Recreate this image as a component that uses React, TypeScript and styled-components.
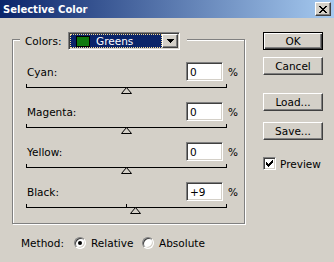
import React from "react";
import styled, { createGlobalStyle, css } from "styled-components";

const FACE = "#D4D0C8";
const SHADOW = "#808080";
const DARK = "#404040";
const NAVY = "#0A246A";

const GlobalStyle = createGlobalStyle`
  html, body { margin: 0; padding: 0; background: ${FACE}; }
  body {
    font-family: "DejaVu Sans", sans-serif;
    font-size: 10.5px;
    color: #000;
  }
  #root { width: 334px; height: 262px; overflow: hidden; }
`;

const raised = css`
  border: 1px solid;
  border-color: #fff ${DARK} ${DARK} #fff;
  box-shadow: inset -1px -1px 0 ${SHADOW};
`;

const sunken = css`
  border: 1px solid;
  border-color: ${SHADOW} #fff #fff ${SHADOW};
  box-shadow: inset 1px 1px 0 ${DARK}, inset -1px -1px 0 ${FACE};
`;

const Window = styled.div`
  width: 334px;
  height: 262px;
  background: ${FACE};
  display: flex;
  flex-direction: column;
`;

const TitleBar = styled.div`
  height: 18px;
  flex: none;
  box-sizing: border-box;
  padding: 0 3px 0 3px;
  background: linear-gradient(to right, ${NAVY}, #a6caf0);
  display: flex;
  align-items: center;
  justify-content: space-between;
`;

const Title = styled.span`
  color: #fff;
  font-weight: bold;
  font-size: 10px;
`;

const CloseButton = styled.div`
  width: 16px;
  height: 14px;
  box-sizing: border-box;
  background: ${FACE};
  ${raised};
  display: flex;
  align-items: center;
  justify-content: center;
`;

const Body = styled.div`
  flex: 1;
  display: flex;
  padding: 14px 11px 0 12px;
`;

const LeftColumn = styled.div`
  width: 233px;
  display: flex;
  flex-direction: column;
`;

const RightColumn = styled.div`
  margin-left: auto;
  width: 60px;
  display: flex;
  flex-direction: column;
`;

const GroupBox = styled.div`
  margin-top: 7px;
  padding: 0 0 1px 13px;
  border: 1px solid ${SHADOW};
  box-shadow: inset 1px 1px 0 #fff, 1px 1px 0 #fff;
  display: flex;
  flex-direction: column;
`;

const GroupHeader = styled.div`
  align-self: flex-start;
  margin: -8px 0 0 -6px;
  padding: 0 7px 0 5px;
  height: 18px;
  background: ${FACE};
  display: flex;
  align-items: center;
`;

const HeaderLabel = styled.span`
  width: 43px;
`;

const Combo = styled.div`
  width: 112px;
  height: 18px;
  box-sizing: border-box;
  ${sunken};
  background: #fff;
  padding: 1px;
  display: flex;
`;

const ComboField = styled.div`
  flex: 1;
  box-sizing: border-box;
  background: ${NAVY};
  border: 1px dotted #f5db95;
  color: #fff;
  display: flex;
  align-items: center;
  padding-left: 5px;
  gap: 6px;
`;

const Swatch = styled.div<{ $color: string }>`
  width: 14px;
  height: 11px;
  box-sizing: border-box;
  border: 1px solid #000;
  background: ${(p) => p.$color};
`;

const ComboArrow = styled.div`
  width: 16px;
  box-sizing: border-box;
  background: ${FACE};
  ${raised};
  display: flex;
  align-items: center;
  justify-content: center;
`;

const Channels = styled.div`
  padding-top: 12px;
  display: flex;
  flex-direction: column;
`;

const Channel = styled.div`
  display: flex;
  flex-direction: column;
`;

const InputRow = styled.div`
  height: 19px;
  display: flex;
  align-items: center;
`;

const ChannelLabel = styled.span`
  flex: 1;
  padding-left: 1px;
`;

const NumberField = styled.input`
  width: 37px;
  height: 19px;
  box-sizing: border-box;
  ${sunken};
  background: #fff;
  font: inherit;
  color: #000;
  padding: 0 0 0 3px;
  margin: 0;
  outline: none;
`;

const Percent = styled.span`
  width: 16px;
  margin-left: 5px;
`;

const SliderTrack = styled.div`
  position: relative;
  width: 201px;
  height: 4px;
  box-sizing: border-box;
  margin: 3px 0 14px;
  border: 1px solid #000;
  border-top: none;
`;

const MidTick = styled.div`
  position: absolute;
  left: 99px;
  top: 0;
  width: 1px;
  height: 3px;
  background: #000;
`;

const Thumb = styled.svg`
  position: absolute;
  top: 3px;
  display: block;
`;

const MethodRow = styled.div`
  margin-top: 12px;
  height: 13px;
  padding-left: 9px;
  display: flex;
  align-items: center;
`;

const MethodLabel = styled.span`
  width: 53px;
`;

const RadioOption = styled.label`
  width: 68px;
  display: flex;
  align-items: center;
  gap: 5px;
`;

const RadioDot = styled.span<{ $checked?: boolean }>`
  width: 12px;
  height: 12px;
  box-sizing: border-box;
  border-radius: 50%;
  border: 1px solid;
  border-color: ${SHADOW} #fff #fff ${SHADOW};
  box-shadow: inset 1px 1px 0 ${DARK}, inset -1px -1px 0 ${FACE};
  background: #fff;
  display: flex;
  align-items: center;
  justify-content: center;
  &::after {
    content: "";
    width: 4px;
    height: 4px;
    border-radius: 50%;
    background: ${(p) => (p.$checked ? "#000" : "transparent")};
  }
`;

const DialogButton = styled.div<{ $default?: boolean; $gap?: number }>`
  height: 18px;
  margin-top: ${(p) => p.$gap ?? 0}px;
  box-sizing: border-box;
  background: ${FACE};
  display: flex;
  align-items: center;
  justify-content: center;
  ${(p) =>
    p.$default
      ? css`
          border: 1px solid #000;
          box-shadow: inset 1px 1px 0 #fff, inset -1px -1px 0 ${DARK},
            inset -2px -2px 0 ${SHADOW};
        `
      : raised};
`;

const CheckRow = styled.label`
  margin-top: 17px;
  height: 13px;
  display: flex;
  align-items: center;
  gap: 4px;
`;

const CheckBox = styled.span`
  width: 13px;
  height: 13px;
  box-sizing: border-box;
  ${sunken};
  background: #fff;
  display: flex;
  align-items: center;
  justify-content: center;
`;

const channels = [
  { name: "Cyan:", value: 0, text: "0" },
  { name: "Magenta:", value: 0, text: "0" },
  { name: "Yellow:", value: 0, text: "0" },
  { name: "Black:", value: 9, text: "+9" },
];

const CloseGlyph = () => (
  <svg width="8" height="7" viewBox="0 0 8 7" shapeRendering="crispEdges">
    <path d="M0 0h2v1H0zM6 0h2v1H6zM1 1h2v1H1zM5 1h2v1H5zM2 2h4v1H2zM3 3h2v1H3zM2 4h4v1H2zM1 5h2v1H1zM5 5h2v1H5zM0 6h2v1H0zM6 6h2v1H6z" fill="#000" />
  </svg>
);

const ArrowGlyph = () => (
  <svg width="7" height="4" viewBox="0 0 7 4" shapeRendering="crispEdges">
    <path d="M0 0h7v1H0zM1 1h5v1H1zM2 2h3v1H2zM3 3h1v1H3z" fill="#000" />
  </svg>
);

const CheckGlyph = () => (
  <svg width="7" height="7" viewBox="0 0 7 7" shapeRendering="crispEdges">
    <path d="M0 2h1v3H0zM1 3h1v3H1zM2 4h1v3H2zM3 3h1v3H3zM4 2h1v3H4zM5 1h1v3H5zM6 0h1v3H6z" fill="#000" />
  </svg>
);

const Slider: React.FC<{ value: number }> = ({ value }) => {
  const offset = Math.round(value * 0.995);
  return (
    <SliderTrack>
      {value !== 0 && <MidTick />}
      <Thumb width="11" height="7" viewBox="0 0 11 7" style={{ left: `${94 + offset}px` }}>
        <polygon points="5.5,0.5 10.5,6.5 0.5,6.5" fill={FACE} stroke="#000" strokeWidth="1" />
      </Thumb>
    </SliderTrack>
  );
};

export default function App() {
  return (
    <>
      <GlobalStyle />
      <Window>
        <TitleBar>
          <Title>Selective Color</Title>
          <CloseButton>
            <CloseGlyph />
          </CloseButton>
        </TitleBar>
        <Body>
          <LeftColumn>
            <GroupBox>
              <GroupHeader>
                <HeaderLabel>Colors:</HeaderLabel>
                <Combo>
                  <ComboField>
                    <Swatch $color="#0f7a0f" />
                    <span>Greens</span>
                  </ComboField>
                  <ComboArrow>
                    <ArrowGlyph />
                  </ComboArrow>
                </Combo>
              </GroupHeader>
              <Channels>
                {channels.map((c) => (
                  <Channel key={c.name}>
                    <InputRow>
                      <ChannelLabel>{c.name}</ChannelLabel>
                      <NumberField readOnly value={c.text} />
                      <Percent>%</Percent>
                    </InputRow>
                    <Slider value={c.value} />
                  </Channel>
                ))}
              </Channels>
            </GroupBox>
            <MethodRow>
              <MethodLabel>Method:</MethodLabel>
              <RadioOption>
                <RadioDot $checked />
                <span>Relative</span>
              </RadioOption>
              <RadioOption>
                <RadioDot />
                <span>Absolute</span>
              </RadioOption>
            </MethodRow>
          </LeftColumn>
          <RightColumn>
            <DialogButton $default>OK</DialogButton>
            <DialogButton $gap={7}>Cancel</DialogButton>
            <DialogButton $gap={18}>Load...</DialogButton>
            <DialogButton $gap={11}>Save...</DialogButton>
            <CheckRow>
              <CheckBox>
                <CheckGlyph />
              </CheckBox>
              <span>Preview</span>
            </CheckRow>
          </RightColumn>
        </Body>
      </Window>
    </>
  );
}
